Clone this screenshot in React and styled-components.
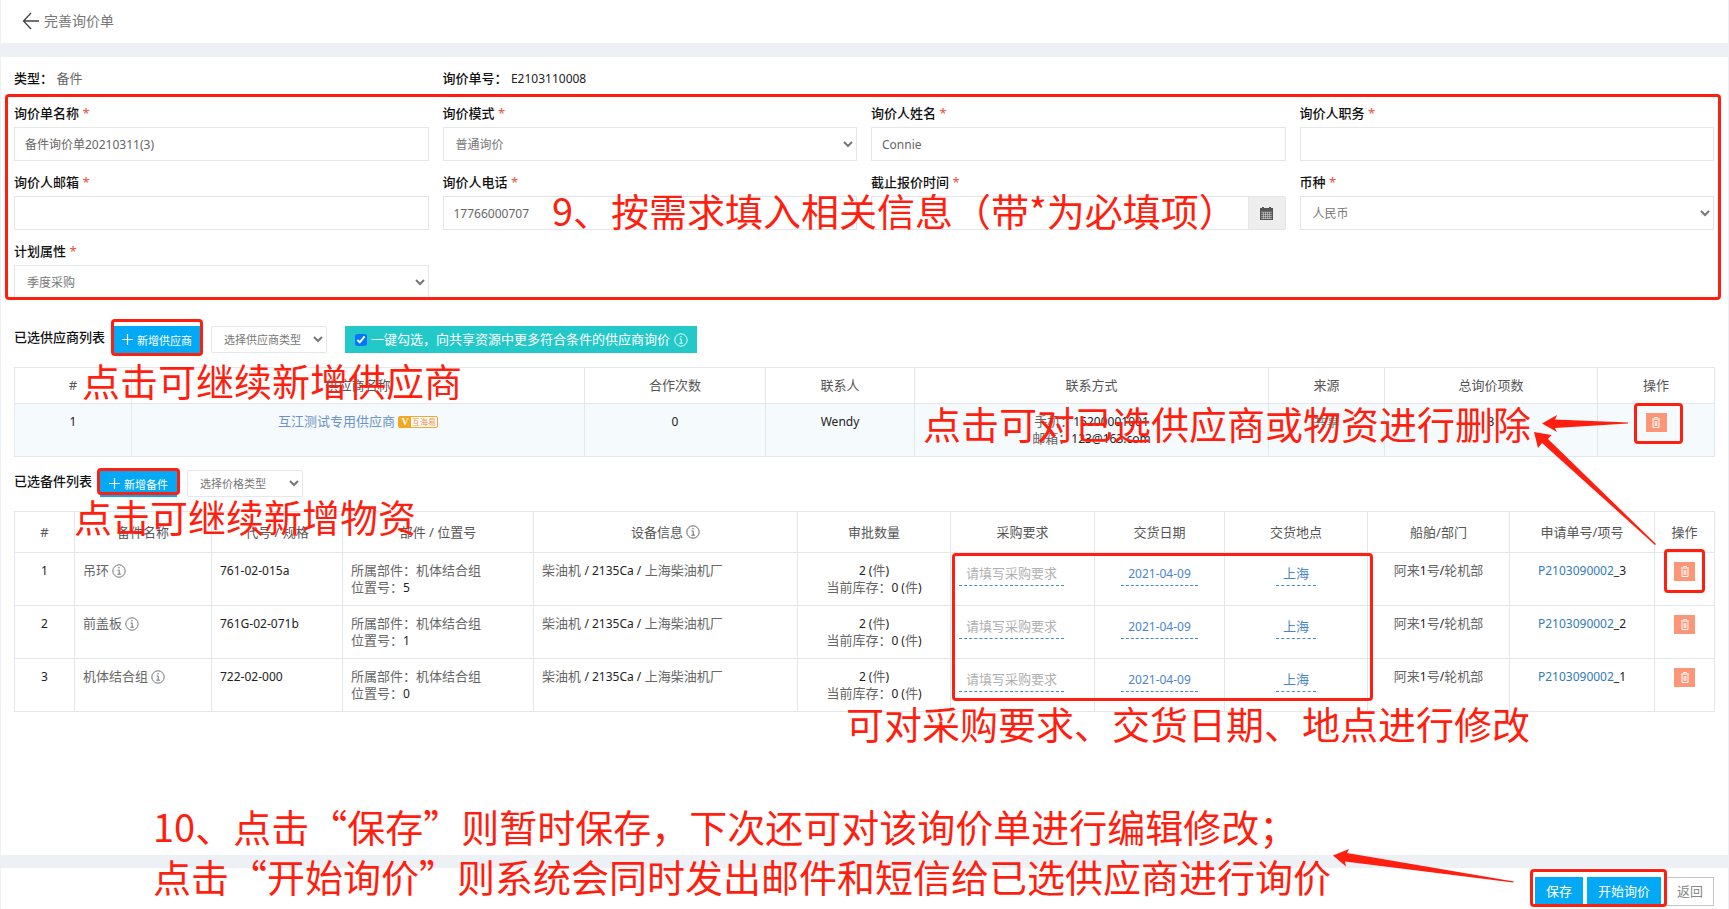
import React, { useState } from "react";
import styled, { createGlobalStyle } from "styled-components";

const RED = "#ff1f10";
const LINE = "#e3e6ea";
const BLUE = "#03a9f4";

const GlobalStyle = createGlobalStyle`
  *, *::before, *::after { box-sizing: border-box; }
  body {
    margin: 0;
    background: #edf0f5;
    color: #666;
    font: 13px/17px "Noto Sans", "Noto Sans CJK SC", sans-serif;
  }
  input, select, button { font-family: inherit; margin: 0; }
`;

const Page = styled.div`
  position: relative;
  display: flex;
  flex-direction: column;
  min-height: 100vh;
  padding: 0 1px;
  overflow: hidden;
`;

const Header = styled.header`
  display: flex;
  align-items: center;
  gap: 4px;
  height: 43px;
  margin-bottom: 14px;
  padding: 0 21px 1px;
  background: #fff;
`;

const BackLink = styled.a`
  display: flex;
  color: #444;
`;

const Title = styled.h1`
  margin: 0;
  font-size: 14px;
  line-height: 20px;
  font-weight: 400;
  color: #777;
`;

const Content = styled.main`
  flex: 1;
  padding: 11px 14px 14px 13px;
  background: #fff;
`;

const Columns = styled.div`
  display: grid;
  grid-template-columns: repeat(4, 1fr);
  gap: 11px 14px;
`;

const Summary = styled(Columns)`
  margin-bottom: 14px;
  line-height: 20px;
`;

const Strong = styled.strong`
  font-weight: 500;
  color: #111;
`;

const Num = styled.span`
  font-size: 12px;
  color: #222;
`;

const Form = styled.form`
  position: relative;
`;

const FieldBox = styled.div`
  display: flex;
  flex-direction: column;
  gap: 4px;
  min-width: 0;
`;

const Label = styled.label`
  font-weight: 500;
  line-height: 20px;
  color: #111;
`;

const Required = styled.span`
  font-weight: 400;
  color: #e8503f;
`;

const Input = styled.input`
  flex: 1;
  width: 100%;
  min-width: 0;
  height: 34px;
  padding: 0 10px;
  border: 1px solid ${LINE};
  background: #fff;
  font-size: 12px;
  color: #666;
`;

const Select = styled.select`
  width: ${(p) => (p.$small ? "116px" : "100%")};
  height: ${(p) => (p.$small ? "27px" : "34px")};
  padding: 0 8px;
  border: 1px solid ${LINE};
  border-radius: ${(p) => (p.$small ? "2px" : "0")};
  background: #fff;
  font-size: ${(p) => (p.$small ? "11px" : "12px")};
  color: #777;
`;

const InputGroup = styled.div`
  display: flex;
`;

const CalendarButton = styled.button`
  display: flex;
  align-items: center;
  justify-content: center;
  width: 37px;
  height: 34px;
  padding: 0;
  border: 1px solid ${LINE};
  border-left: 0;
  border-radius: 0 2px 2px 0;
  background: #eee;
  color: #555;
`;

const Toolbar = styled.div`
  display: flex;
  align-items: flex-start;
  gap: 10px;
  margin-top: ${(p) => p.$top};
`;

const SectionTitle = styled.h2`
  margin: 0 -2px 0 0;
  font-size: 13px;
  line-height: 22px;
  font-weight: 500;
  color: #111;
`;

const Highlighted = styled.span`
  position: relative;
  display: inline-flex;
  gap: 4px;
`;

const Highlight = styled.span`
  position: absolute;
  inset: ${(p) => p.$inset};
  border: 3px solid ${RED};
  border-radius: 4px;
  pointer-events: none;
`;

const AddButton = styled.button`
  display: flex;
  align-items: center;
  gap: 4px;
  height: 27px;
  padding: 0 9px;
  border: 0;
  background: ${BLUE};
  color: #fff;
  font-size: 11px;
`;

const ShareOption = styled.label`
  display: flex;
  align-items: center;
  gap: 4px;
  height: 27px;
  margin-left: 8px;
  padding: 0 9px 0 10px;
  background: #23c9c9;
  color: #fff;
`;

const Checkbox = styled.input`
  width: 12px;
  height: 12px;
  accent-color: #0075ff;
`;

const Table = styled.table`
  width: 100%;
  margin-top: 14px;
  table-layout: fixed;
  border-collapse: collapse;
  th, td { border: 1px solid ${LINE}; }
`;

const Th = styled.th`
  height: ${(p) => p.$height};
  padding: 0 9px;
  font-weight: 400;
  color: #555;
`;

const Td = styled.td`
  height: 53px;
  padding: 9px 8px;
  text-align: ${(p) => (p.$left ? "left" : "center")};
  vertical-align: top;
  background: ${(p) => (p.$tinted ? "#f5fafd" : "#fff")};
  white-space: nowrap;
`;

const WithIcon = styled.span`
  display: inline-flex;
  align-items: center;
  gap: 3px;
`;

const SupplierLink = styled.a`
  color: #6f93c2;
  text-decoration: none;
`;

const OrderLink = styled.a`
  color: #337ab7;
  text-decoration: none;
`;

const Tag = styled.span`
  display: inline-flex;
  height: 12px;
  border: 1px solid #f5a623;
  border-radius: 2px;
  background: #fff;
  font-size: 8px;
  line-height: 10px;
  color: #f08a4b;
`;

const TagMark = styled.b`
  width: 12px;
  background: #f5a623;
  color: #fff;
  font-family: "Liberation Serif", serif;
  font-size: 10px;
  text-align: center;
`;

const TagText = styled.span`
  padding: 0 1px;
`;

const Shared = styled.span`
  color: #1cb4a4;
`;

const EditLink = styled.a`
  display: inline-block;
  height: 24px;
  padding: 3px 7px 0;
  border-bottom: 1px dashed #428bca;
  color: ${(p) => (p.$empty ? "#b0b0b0" : "#4a86c5")};
  font-size: ${(p) => (p.$numeric ? "12px" : "13px")};
  text-decoration: none;
`;

const DeleteButton = styled.button`
  display: flex;
  align-items: center;
  justify-content: center;
  width: 21px;
  height: 19px;
  padding: 0;
  border: 0;
  background: #fd9678;
  color: #fff;
`;

const Footer = styled.footer`
  display: flex;
  justify-content: flex-end;
  gap: 5px;
  margin-top: 13px;
  padding: 9px 14px 3px;
  background: #fff;
`;

const FooterButton = styled.button`
  height: 29px;
  padding: 0 ${(p) => (p.$plain ? "10px" : "11px")} 2px;
  border: ${(p) => (p.$plain ? "1px solid #c4c4c4" : "0")};
  background: ${(p) => (p.$plain ? "#fff" : BLUE)};
  color: ${(p) => (p.$plain ? "#888" : "#fff")};
  font-size: 13px;
`;

const Overlay = styled.div`
  position: absolute;
  inset: 0;
  pointer-events: none;
`;

const Note = styled.p`
  position: absolute;
  left: ${(p) => p.$x}px;
  top: ${(p) => p.$y}px;
  margin: 0;
  color: ${RED};
  font-family: "Noto Sans CJK SC", sans-serif;
  font-size: 38px;
  font-weight: 400;
  line-height: 50px;
  white-space: nowrap;
`;

const CellFrame = styled.div`
  position: absolute;
  left: 952px;
  top: 553px;
  width: 421px;
  height: 148px;
  border: 3px solid ${RED};
  border-radius: 4px;
`;

const Arrows = styled.svg`
  position: absolute;
  left: 0;
  top: 0;
  fill: ${RED};
`;

const InfoIcon = ({ size = 14 }) => (
  <svg width={size} height={size} viewBox="0 0 14 14" fill="none" stroke="currentColor" aria-hidden="true">
    <circle cx="7" cy="7" r="6.2" strokeWidth="0.9" />
    <path d="M5.6 6h1.6v4M5.3 10.2h3.6" strokeWidth="0.9" />
    <circle cx="7" cy="3.8" r="0.7" fill="currentColor" stroke="none" />
  </svg>
);

const BackIcon = () => (
  <svg width="18" height="18" viewBox="0 0 18 18" fill="none" stroke="currentColor" strokeWidth="1.3" aria-hidden="true">
    <path d="M17 9H1.5M9 1 1.5 9 9 17" />
  </svg>
);

const PlusIcon = () => (
  <svg width="11" height="11" viewBox="0 0 11 11" stroke="currentColor" strokeWidth="1.2" aria-hidden="true">
    <path d="M5.5 0v11M0 5.5h11" />
  </svg>
);

const CalendarIcon = () => (
  <svg width="13" height="13" viewBox="0 0 13 13" aria-hidden="true">
    <path fill="currentColor" d="M0 1h2V0h2v1h5V0h2v1h2v3H0zM0 4h13v9H0z" />
    <path stroke="#eee" strokeWidth="0.5" d="M1 5.2h11M1 7.4h11M1 9.4h11M1 11.4h11M3.4 5v7M5.5 5v7M7.6 5v7M9.7 5v7" />
  </svg>
);

const TrashIcon = () => (
  <svg width="8" height="11" viewBox="0 0 8 11" fill="none" stroke="currentColor" aria-hidden="true">
    <path d="M0 2h8M2.5 1.5v-1h3v1M1 2.5v8h6v-8M3.2 4v5M4.8 4v5" />
  </svg>
);

const Delete = ({ inset }) => (
  <Highlighted>
    <DeleteButton type="button" aria-label="删除">
      <TrashIcon />
    </DeleteButton>
    {inset && <Highlight $inset={inset} />}
  </Highlighted>
);

const FIELDS = [
  { id: "name", label: "询价单名称", value: "备件询价单20210311(3)" },
  { id: "mode", label: "询价模式", options: ["普通询价"] },
  { id: "person", label: "询价人姓名", value: "Connie" },
  { id: "post", label: "询价人职务", value: "" },
  { id: "mail", label: "询价人邮箱", value: "" },
  { id: "phone", label: "询价人电话", value: "17766000707" },
  { id: "deadline", label: "截止报价时间", value: "", date: true },
  { id: "currency", label: "币种", options: ["人民币"] },
  { id: "plan", label: "计划属性", options: ["季度采购"] },
];

const Field = ({ id, label, value, options, date }) => (
  <FieldBox>
    <Label htmlFor={id}>
      {label} <Required>*</Required>
    </Label>
    {options ? (
      <Select id={id}>
        {options.map((o) => (
          <option key={o}>{o}</option>
        ))}
      </Select>
    ) : (
      <InputGroup>
        <Input id={id} type="text" defaultValue={value} />
        {date && (
          <CalendarButton type="button" aria-label="选择日期">
            <CalendarIcon />
          </CalendarButton>
        )}
      </InputGroup>
    )}
  </FieldBox>
);

const SUPPLIER_COLUMNS = [
  ["#", 117], ["供应商名称", 453], ["合作次数", 181], ["联系人", 149],
  ["联系方式", 354], ["来源", 116], ["总询价项数", 213], ["操作", 117],
];

const PART_COLUMNS = [
  ["#", 60], ["备件名称", 137], ["代号 / 规格", 131], ["部件 / 位置号", 191],
  ["设备信息", 264], ["审批数量", 153], ["采购要求", 144], ["交货日期", 130],
  ["交货地点", 143], ["船舶/部门", 142], ["申请单号/项号", 145], ["操作", 60],
];

const PARTS = [
  { name: "吊环", code: "761-02-015a", position: 5, item: 3 },
  { name: "前盖板", code: "761G-02-071b", position: 1, item: 2 },
  { name: "机体结合组", code: "722-02-000", position: 0, item: 1 },
];

const TableHead = ({ columns, height }) => (
  <>
    <colgroup>
      {columns.map(([name, width]) => (
        <col key={name} width={width} />
      ))}
    </colgroup>
    <thead>
      <tr>
        {columns.map(([name]) => (
          <Th key={name} scope="col" $height={height}>
            {name === "设备信息" ? (
              <WithIcon>
                {name}
                <InfoIcon />
              </WithIcon>
            ) : (
              name
            )}
          </Th>
        ))}
      </tr>
    </thead>
  </>
);

const PartRow = ({ part, index }) => (
  <tr>
    <Td><Num>{index + 1}</Num></Td>
    <Td $left>
      <WithIcon>
        {part.name}
        <InfoIcon />
      </WithIcon>
    </Td>
    <Td $left><Num>{part.code}</Num></Td>
    <Td $left>
      所属部件：机体结合组
      <br />
      位置号：<Num>{part.position}</Num>
    </Td>
    <Td $left>柴油机 <Num>/ 2135Ca /</Num> 上海柴油机厂</Td>
    <Td>
      <Num>2 (</Num>件<Num>)</Num>
      <br />
      当前库存：<Num>0 (</Num>件<Num>)</Num>
    </Td>
    <Td $left><EditLink href="#" $empty>请填写采购要求</EditLink></Td>
    <Td><EditLink href="#" $numeric>2021-04-09</EditLink></Td>
    <Td><EditLink href="#">上海</EditLink></Td>
    <Td>阿来<Num>1</Num>号<Num>/</Num>轮机部</Td>
    <Td>
      <Num>
        <OrderLink href="#">P2103090002</OrderLink>_{part.item}
      </Num>
    </Td>
    <Td><Delete inset={index === 0 ? "-13px -10px -12px -10px" : null} /></Td>
  </tr>
);

export default function App() {
  const [shared, setShared] = useState(true);
  return (
    <Page>
      <GlobalStyle />
      <Header>
        <BackLink href="#" aria-label="后退">
          <BackIcon />
        </BackLink>
        <Title>完善询价单</Title>
      </Header>

      <Content>
        <Summary>
          <div><Strong>类型：</Strong> 备件</div>
          <div><Strong>询价单号：</Strong> <Num>E2103110008</Num></div>
        </Summary>

        <Form>
          <Columns>
            {FIELDS.map((f) => (
              <Field key={f.id} {...f} />
            ))}
          </Columns>
          <Highlight $inset="-9px -7px -1px -9px" />
        </Form>

        <Toolbar $top="27px">
          <SectionTitle>已选供应商列表</SectionTitle>
          <Highlighted>
            <AddButton type="button"><PlusIcon />新增供应商</AddButton>
            <Highlight $inset="-7px -2px -3px -2px" />
          </Highlighted>
          <Select $small aria-label="选择供应商类型">
            <option>选择供应商类型</option>
          </Select>
          <ShareOption>
            <Checkbox type="checkbox" checked={shared} onChange={(e) => setShared(e.target.checked)} />
            一键勾选，向共享资源中更多符合条件的供应商询价
            <InfoIcon />
          </ShareOption>
        </Toolbar>

        <Table>
          <TableHead columns={SUPPLIER_COLUMNS} height="36px" />
          <tbody>
            <tr>
              <Td $tinted><Num>1</Num></Td>
              <Td $tinted>
                <WithIcon>
                  <SupplierLink href="#">互江测试专用供应商</SupplierLink>
                  <Tag><TagMark>V</TagMark><TagText>互海易</TagText></Tag>
                </WithIcon>
              </Td>
              <Td $tinted><Num>0</Num></Td>
              <Td $tinted><Num>Wendy</Num></Td>
              <Td $tinted>
                手机：<Num>15200001001</Num>
                <br />
                邮箱：<Num>123@163.com</Num>
              </Td>
              <Td $tinted><Shared>共享</Shared></Td>
              <Td $tinted><Num>3</Num></Td>
              <Td $tinted><Delete inset="-10px -16px -12px -12px" /></Td>
            </tr>
          </tbody>
        </Table>

        <Toolbar $top="13px">
          <SectionTitle>已选备件列表</SectionTitle>
          <Highlighted>
            <AddButton type="button"><PlusIcon />新增备件</AddButton>
            <Highlight $inset="-2px -3px 2px -3px" />
          </Highlighted>
          <Select $small aria-label="选择价格类型">
            <option>选择价格类型</option>
          </Select>
        </Toolbar>

        <Table>
          <TableHead columns={PART_COLUMNS} height="41px" />
          <tbody>
            {PARTS.map((part, i) => (
              <PartRow key={part.code} part={part} index={i} />
            ))}
          </tbody>
        </Table>
      </Content>

      <Footer>
        <Highlighted>
          <FooterButton type="button">保存</FooterButton>
          <FooterButton type="button">开始询价</FooterButton>
          <Highlight $inset="-8px -6px -1px -5px" />
        </Highlighted>
        <FooterButton type="button" $plain>返回</FooterButton>
      </Footer>

      <Overlay>
        <CellFrame />
        <Note $x={552} $y={185}>9、按需求填入相关信息（带*为必填项）</Note>
        <Note $x={82} $y={355}>点击可继续新增供应商</Note>
        <Note $x={923} $y={398}>点击可对已选供应商或物资进行删除</Note>
        <Note $x={74} $y={491}>点击可继续新增物资</Note>
        <Note $x={846} $y={698}>可对采购要求、交货日期、地点进行修改</Note>
        <Note $x={153} $y={801}>
          10、点击“保存”则暂时保存，下次还可对该询价单进行编辑修改；
          <br />
          点击“开始询价”则系统会同时发出邮件和短信给已选供应商进行询价
        </Note>
        <Arrows width="1729" height="909" viewBox="0 0 1729 909" aria-hidden="true">
          <path d="M1542 423.5 1557 415 1555 419.500 1628 422.500 1628 423.500 1555 428 1557 432Z" />
          <path d="M1534 432 1551.500 435 1548 439 1656 544 1655 545 1542 443 1538 448Z" />
          <path d="M1333 855.500 1349 849 1347 853 1514 881.500 1513 882.500 1345 861.500 1346 866.500Z" />
        </Arrows>
      </Overlay>
    </Page>
  );
}
